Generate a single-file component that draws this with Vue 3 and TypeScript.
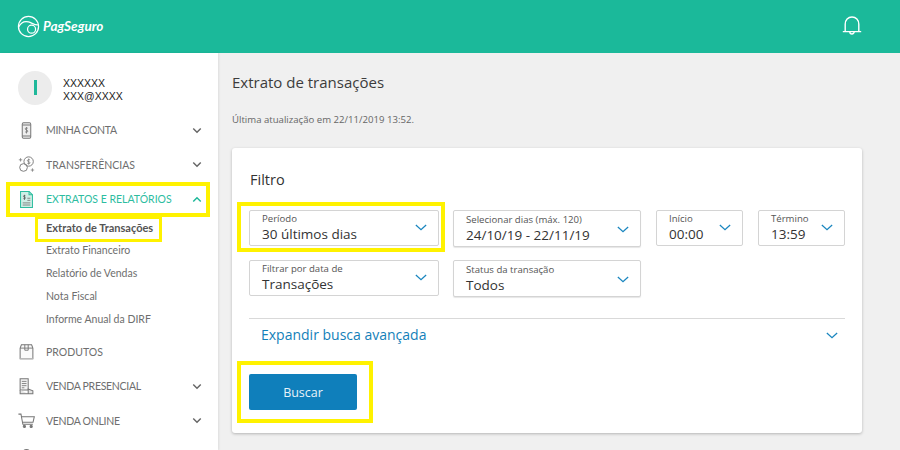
<script setup lang="ts">
interface Field { label: string; value: string; size: string; tall?: boolean }
const row1: Field[] = [
  { label: 'Período', value: '30 últimos dias', size: 'w190' },
  { label: 'Selecionar dias (máx. 120)', value: '24/10/19 - 22/11/19', size: 'w188', tall: true },
  { label: 'Início', value: '00:00', size: 'w87' },
  { label: 'Término', value: '13:59', size: 'w87' },
]
const row2: Field[] = [
  { label: 'Filtrar por data de', value: 'Transações', size: 'w190' },
  { label: 'Status da transação', value: 'Todos', size: 'w188', tall: true },
]
const subs = ['Extrato de Transações', 'Extrato Financeiro', 'Relatório de Vendas', 'Nota Fiscal', 'Informe Anual da DIRF']
</script>

<template>
  <div class="page">
    <header class="top">
      <div class="brand">
        <svg class="logo" viewBox="0 0 24 24" width="23" height="23" fill="none" stroke="#fff" stroke-width="1.300">
          <circle cx="12" cy="12" r="10.500" />
          <path d="M1.800 12.500C4 8 8 6.200 12 7.200c3.600.9 5.800 3.400 9.800 3.200" />
          <circle cx="15.200" cy="14.800" r="4.200" />
        </svg>
        <span class="brand-name">PagSeguro</span>
      </div>
      <svg class="bell" viewBox="0 0 20 20" width="20" height="20" fill="none" stroke="#fff" stroke-width="1.400">
        <path d="M.8 15.600h18.400M3.200 15.600V8.200C3.200 4 6 1 10 1s6.800 3 6.800 7.200v7.400" />
        <path d="M7.800 15.800a2.200 2.200 0 0 0 4.400 0" />
      </svg>
    </header>

    <div class="body">
      <aside class="side">
        <div class="user">
          <div class="avatar"><span class="initial"></span></div>
          <div class="user-text"><div>XXXXXX</div><div>XXX@XXXX</div></div>
        </div>

        <div class="item">
          <svg class="ico" viewBox="0 0 20 20" fill="none" stroke="#777" stroke-width="1.200">
            <rect x="5" y="1" width="10" height="18" rx="1.500" fill="#eee" />
            <path d="M5 3.500h10M5 16.500h10" />
            <path d="M11.500 7.500c-.5-.8-3-1-3 .6s3 1 3 2.700-2.700 1.400-3.200.5M10 6v7.500" stroke-width="1" />
          </svg>
          <span class="name tight">MINHA CONTA</span>
          <svg class="chev" viewBox="0 0 12 8" width="10" height="7"><path d="M1.500 1.500 6 6l4.500-4.500" fill="none" stroke="#666" stroke-width="1.700" /></svg>
        </div>

        <div class="item">
          <svg class="ico" viewBox="0 0 20 20" fill="none" stroke="#777" stroke-width="1.100">
            <circle cx="12.500" cy="6.500" r="5.500" />
            <circle cx="6.500" cy="13.500" r="4.500" />
            <path d="M14.200 4.800c-.4-.8-3.200-.9-3.200.7s3.200 1 3.200 2.500-2.800 1.300-3.300.4M12.500 3v7" stroke-width=".9" />
            <path d="M1 4.500h4M3 2.500v4M15 16.500h4M17 14.500v4" stroke-width=".9" />
          </svg>
          <span class="name">TRANSFERÊNCIAS</span>
          <svg class="chev" viewBox="0 0 12 8" width="10" height="7"><path d="M1.500 1.500 6 6l4.500-4.500" fill="none" stroke="#666" stroke-width="1.700" /></svg>
        </div>

        <div class="item active">
          <svg class="ico" viewBox="0 0 20 20" fill="none" stroke="#2dbd9f" stroke-width="1.200">
            <path d="M3 .5h10L17 4.500v15H3z" fill="#cfeee6" />
            <path d="M13 .5V4.500h4" />
            <path d="M5.500 14h9M5.500 16.500h9M11 8.500h3.500M11 11h3.500" stroke="#777" stroke-width="1" />
            <path d="M8.800 5.700c-.4-.6-2.400-.6-2.400.5s2.400.8 2.400 2-2.100 1-2.500.4M7.600 4.500v6" stroke="#555" stroke-width=".9" />
          </svg>
          <span class="name">EXTRATOS E RELATÓRIOS</span>
          <svg class="chev" viewBox="0 0 12 8" width="10" height="7"><path d="M1.500 6.500 6 2l4.500 4.500" fill="none" stroke="#1fb89a" stroke-width="1.700" /></svg>
        </div>

        <ul class="subs">
          <li v-for="(s, i) in subs" :key="s" :class="{ current: i === 0 }">{{ s }}</li>
        </ul>

        <div class="item">
          <svg class="ico" viewBox="0 0 20 20" fill="none" stroke="#777" stroke-width="1.200">
            <path d="M2.500 6 4 2h12l1.500 4v12.500h-15z" fill="#fafafa" />
            <path d="M2.500 6h15M8 2v6.500h4V2" stroke-width="1.100" />
            <path d="M2.500 18.500h15" stroke="#bbb" stroke-width="1.600" />
          </svg>
          <span class="name">PRODUTOS</span>
        </div>

        <div class="item">
          <svg class="ico" viewBox="0 0 20 20" fill="none" stroke="#777" stroke-width="1.200">
            <path d="M2.500 1h9.500v13h-9.500z" fill="#f2f2f2" />
            <path d="M4.500 4h5.500M4.500 6.500h5.500M4.500 9h5.500M4.500 11.500h3" stroke-width="1" />
            <path d="M2.500 14v4.500h15v-3.500L12 13v5.500" fill="#e4e4e4" />
          </svg>
          <span class="name tight">VENDA PRESENCIAL</span>
          <svg class="chev" viewBox="0 0 12 8" width="10" height="7"><path d="M1.500 1.500 6 6l4.500-4.500" fill="none" stroke="#666" stroke-width="1.700" /></svg>
        </div>

        <div class="item">
          <svg class="ico" viewBox="0 0 20 20" fill="none" stroke="#777" stroke-width="1.200">
            <path d="M.5 2.500h3l2.200 12h11.800" />
            <path d="M4.200 5.500h15l-1.500 6.500h-12.300" />
            <circle cx="7.500" cy="17" r="1.300" fill="#777" />
            <circle cx="15.500" cy="17" r="1.300" fill="#777" />
          </svg>
          <span class="name tight">VENDA ONLINE</span>
          <svg class="chev" viewBox="0 0 12 8" width="10" height="7"><path d="M1.500 1.500 6 6l4.500-4.500" fill="none" stroke="#666" stroke-width="1.700" /></svg>
        </div>

        <div class="item">
          <svg class="ico" viewBox="0 0 20 20" fill="none" stroke="#777" stroke-width="1.200">
            <circle cx="10" cy="7" r="4" />
          </svg>
        </div>

        <span class="mark mark-menu"></span>
        <span class="mark mark-sub"></span>
      </aside>

      <main class="main">
        <h1 class="title">Extrato de transações</h1>
        <p class="updated">Última atualização em 22/11/2019 13:52.</p>

        <section class="card">
          <h2 class="card-title">Filtro</h2>

          <div class="fields">
            <div v-for="f in row1" :key="f.label" class="field" :class="[f.size, { tall: f.tall }]">
              <div class="texts">
                <span class="label">{{ f.label }}</span>
                <span class="value">{{ f.value }}</span>
              </div>
              <svg class="fchev" viewBox="0 0 14 8" width="12" height="7"><path d="M1 1l6 5.500L13 1" fill="none" stroke="#1a86bf" stroke-width="1.500" /></svg>
            </div>
          </div>
          <div class="fields second">
            <div v-for="f in row2" :key="f.label" class="field" :class="[f.size, { tall: f.tall }]">
              <div class="texts">
                <span class="label">{{ f.label }}</span>
                <span class="value">{{ f.value }}</span>
              </div>
              <svg class="fchev" viewBox="0 0 14 8" width="12" height="7"><path d="M1 1l6 5.500L13 1" fill="none" stroke="#1a86bf" stroke-width="1.500" /></svg>
            </div>
          </div>

          <div class="expand">
            <span class="expand-text">Expandir busca avançada</span>
            <svg viewBox="0 0 14 8" width="12" height="7"><path d="M1 1l6 5.500L13 1" fill="none" stroke="#1a86bf" stroke-width="1.500" /></svg>
          </div>

          <button class="search" type="button">Buscar</button>

          <span class="mark mark-period"></span>
          <span class="mark mark-search"></span>
        </section>
      </main>
    </div>
  </div>
</template>

<style>
html, body { margin: 0; overflow: hidden; }
</style>

<style scoped>
.page {
  width: 900px;
  height: 450px;
  overflow: hidden;
  display: flex;
  flex-direction: column;
  font-family: "Open Sans", "Liberation Sans", sans-serif;
  background: #f0f0f0;
}
.top {
  height: 53px;
  flex: none;
  background: #1bb99a;
  display: flex;
  align-items: center;
  justify-content: space-between;
  padding: 0 38px 0 17px;
  box-sizing: border-box;
}
.brand { display: flex; align-items: center; gap: 2px; margin-top: -1px; }
.brand-name {
  font: italic 700 13.500px "Lato", sans-serif;
  color: #fff;
  margin-left: 1px;
}
.bell { margin-top: -1px; }
.body { flex: 1; display: flex; min-height: 0; }
.side {
  width: 218px;
  flex: none;
  background: #fff;
  position: relative;
  padding: 17px 0 0;
  box-sizing: border-box;
  box-shadow: 1px 0 2px rgba(0, 0, 0, .08);
  font-family: "Lato", "Open Sans", sans-serif;
}
.user { display: flex; align-items: center; height: 35px; padding-left: 18px; gap: 11px; margin-bottom: 8px; }
.avatar {
  width: 34px;
  height: 34px;
  border-radius: 50%;
  background: #ececec;
  display: flex;
  align-items: center;
  justify-content: center;
}
.initial { width: 3px; height: 15px; background: #1fb89a; }
.user-text {
  font: 10.500px/13px "Liberation Sans", sans-serif;
  color: #222;
  margin-top: 4px;
}
.item {
  height: 34.500px;
  display: flex;
  align-items: center;
  padding: 0 16px 0 18px;
  color: #707070;
}
.ico { width: 17px; height: 17px; flex: none; }
.name { margin-left: 11px; font-size: 10.500px; flex: 1; color: #6e6e6e; }
.tight { letter-spacing: -.3px; }
.chev { flex: none; }
.active .name { color: #2dbd9f; }
.subs { list-style: none; margin: -1px 0 0; padding: 0 0 4px 46px; }
.subs li { height: 23px; line-height: 23px; font-size: 10.500px; color: #6e6e6e; }
.subs .current { font-weight: 700; font-size: 11px; color: #555; }
.mark { position: absolute; border: 4px solid #fff200; box-sizing: border-box; pointer-events: none; }
.mark-menu { left: 6px; top: 129px; width: 204px; height: 35px; }
.mark-sub { left: 35px; top: 163px; width: 127px; height: 26px; border-width: 3px; }

.main { flex: 1; padding: 19px 0 0 14px; box-sizing: border-box; min-width: 0; }
.title { margin: 0; font-size: 15px; line-height: 20px; font-weight: 400; color: #3c3c3c; }
.updated { margin: 21px 0 0; font-size: 9.600px; line-height: 14px; color: #666; }
.card {
  position: relative;
  width: 630px;
  height: 285px;
  margin-top: 21px;
  background: #fff;
  border-radius: 3px;
  box-shadow: 0 1px 3px rgba(0, 0, 0, .25);
  padding: 21px 17px 0;
  box-sizing: border-box;
}
.card-title { margin: 0 0 20px 1px; font-size: 14.500px; line-height: 21px; font-weight: 400; color: #333; }
.fields { display: flex; gap: 14px; }
.second { margin-top: 13px; }
.field {
  height: 36px;
  border: 1px solid #d4d4d4;
  border-radius: 2px;
  box-sizing: border-box;
  display: flex;
  align-items: center;
  justify-content: space-between;
  padding: 0 11px 0 12px;
  background: #fff;
}
.tall { height: 37px; box-shadow: 0 1px 1px rgba(0, 0, 0, .1); }
.w190 { width: 190px; }
.w188 { width: 188px; }
.w87 { width: 87px; }
.w87 + .w87 { margin-left: 1px; }
.w188 + .w87 { margin-left: 1px; }
.texts { display: flex; flex-direction: column; }
.label { font-size: 9.600px; line-height: 12px; color: #555; }
.value { font-size: 13.500px; line-height: 18px; color: #333; }
.fchev { margin-top: -2px; }
.tall .fchev { margin-top: 2px; }
.expand {
  margin-top: 21px;
  border-top: 1px solid #d9d9d9;
  height: 37px;
  display: flex;
  align-items: center;
  justify-content: space-between;
  padding: 0 7px 3px 12px;
  box-sizing: border-box;
  color: #137fb9;
  font-size: 14px;
}
.expand-text { margin-top: -2px; }
.search {
  display: block;
  margin-top: 19px;
  width: 108px;
  height: 36px;
  border: 0;
  border-radius: 2px;
  background: #0f7fbb;
  color: #e8f3f9;
  font: 12.500px "Open Sans", sans-serif;
  padding: 0;
}
.mark-period { left: 5px; top: 54px; width: 208px; height: 50px; }
.mark-search { left: 5px; top: 213px; width: 136px; height: 62px; }
</style>
